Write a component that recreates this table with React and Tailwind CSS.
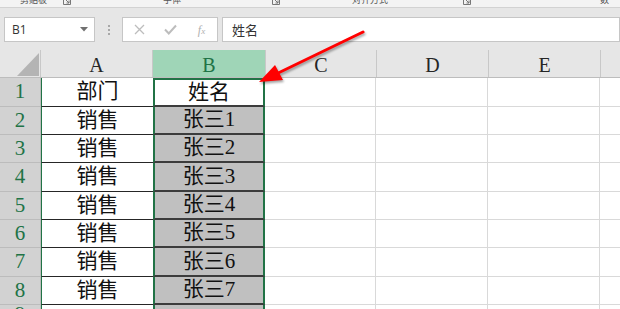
import React from "react";

const rowsData = [
  ["1", "部门", "姓名"],
  ["2", "销售", "张三1"],
  ["3", "销售", "张三2"],
  ["4", "销售", "张三3"],
  ["5", "销售", "张三4"],
  ["6", "销售", "张三5"],
  ["7", "销售", "张三6"],
  ["8", "销售", "张三7"],
  ["9", "", ""],
];
const heights = ["h-[29px]", "h-[28px]", "h-[28px]", "h-[29px]", "h-[28px]", "h-[28px]", "h-[29px]", "h-[28px]", "h-[20px]"];

function Launcher() {
  return (
    <svg width="8" height="8" viewBox="0 0 8 8" className="shrink-0 mt-[-3px]">
      <path d="M0.5 0.5 H7.5 V7.5 H0.5 Z" fill="none" stroke="#777" strokeWidth="1" />
      <path d="M3 3 L6 6 M6 3.5 V6 H3.5" fill="none" stroke="#777" strokeWidth="1" />
    </svg>
  );
}

export default function App() {
  return (
    <div className="relative w-[620px] h-[309px] overflow-hidden bg-white font-['Liberation_Serif','Noto_Sans_CJK_SC',serif]">
      {/* top ribbon strip (cut off) */}
      <div className="flex h-[8px] bg-[#f3f3f3] border-b border-[#d2d2d2] overflow-hidden text-[9px] leading-none text-[#555] font-['Noto_Sans_CJK_SC',sans-serif]">
        <div className="w-[20px] shrink-0" />
        <span className="shrink-0 mt-[-5px] w-[27px]">剪贴板</span>
        <div className="w-[16px] shrink-0" />
        <Launcher />
        <div className="w-[92px] shrink-0" />
        <span className="shrink-0 mt-[-5px] w-[18px]">字体</span>
        <div className="w-[91px] shrink-0" />
        <Launcher />
        <div className="w-[72px] shrink-0" />
        <span className="shrink-0 mt-[-5px] w-[36px]">对齐方式</span>
        <div className="w-[75px] shrink-0" />
        <Launcher />
        <div className="w-[129px] shrink-0" />
        <span className="shrink-0 mt-[-5px]">数</span>
      </div>

      {/* formula bar */}
      <div className="flex items-start h-[42px] bg-[#e6e6e6] pt-[9px] pl-[4px]">
        <div className="w-[91px] h-[25px] shrink-0 bg-white border border-[#c6c6c6] flex items-center justify-between pl-[7px] pr-[6px] font-['Open_Sans',sans-serif] text-[12px] text-[#333]">
          <span>B1</span>
          <svg width="8" height="5" viewBox="0 0 8 5"><path d="M0 0 H8 L4 4.5 Z" fill="#707070" /></svg>
        </div>
        <div className="w-[27px] h-[25px] shrink-0 flex flex-col items-center justify-center gap-[2px]">
          <span className="w-[2px] h-[2px] bg-[#a8a8a8]" />
          <span className="w-[2px] h-[2px] bg-[#a8a8a8]" />
          <span className="w-[2px] h-[2px] bg-[#a8a8a8]" />
        </div>
        <div className="w-[96px] h-[25px] shrink-0 bg-white border border-[#c6c6c6] flex items-center">
          <div className="w-[32px] flex justify-center">
            <svg width="11" height="11" viewBox="0 0 11 11"><path d="M1 1 L10 10 M10 1 L1 10" stroke="#bdbdbd" strokeWidth="1.3" /></svg>
          </div>
          <div className="w-[31px] flex justify-center">
            <svg width="13" height="11" viewBox="0 0 13 11"><path d="M1 5.5 L4.8 9.5 L12 1.5" fill="none" stroke="#bdbdbd" strokeWidth="2" /></svg>
          </div>
          <div className="w-[31px] flex justify-center text-[12px] italic text-[#b0b0b0] font-['Liberation_Serif',serif]">
            <span>f<span className="text-[9px]">x</span></span>
          </div>
        </div>
        <div className="ml-[4px] flex-1 h-[25px] bg-white border border-[#c6c6c6] flex items-center pl-[9px] font-['Noto_Sans_CJK_SC',sans-serif] text-[13px] text-[#333]">
          姓名
        </div>
      </div>

      {/* column header */}
      <div className="flex h-[28px] bg-[#e6e6e6] border-b border-[#bdbdbd] text-[20px] text-[#262626]">
        <div className="w-[41px] shrink-0 flex items-end justify-end pr-[1px] pb-[1px] border-r border-[#c8c8c8]">
          <svg width="22" height="23" viewBox="0 0 22 23"><path d="M22 0 V23 H0 Z" fill="#b4b4b4" /></svg>
        </div>
        <div className="w-[112px] shrink-0 flex items-center justify-center border-r border-[#c8c8c8] pt-[3px]">A</div>
        <div className="w-[112px] shrink-0 flex items-center justify-center bg-[#9fd5b7] text-[#217346] pt-[3px]">B</div>
        <div className="w-[112px] shrink-0 flex items-center justify-center border-l border-r border-[#c8c8c8] pt-[3px]">C</div>
        <div className="w-[112px] shrink-0 flex items-center justify-center border-r border-[#c8c8c8] pt-[3px]">D</div>
        <div className="w-[112px] shrink-0 flex items-center justify-center border-r border-[#c8c8c8] pt-[3px]">E</div>
        <div className="flex-1" />
      </div>

      {/* rows */}
      {rowsData.map(([n, a, b], i) => (
        <div key={n} className={`flex ${heights[i]}`}>
          <div className="w-[41px] shrink-0 flex items-center justify-center bg-[#d2d2d2] border-b border-r border-[#bcbcbc] text-[21px] text-[#217346]">
            {n}
          </div>
          <div className="w-[112px] shrink-0 flex items-center justify-center bg-white border-l border-[#217346] border-b-[1px] border-b-[#262626] text-[21px] text-[#111]">
            {a}
          </div>
          <div
            className={`w-[112px] shrink-0 flex items-center justify-center border-x-2 border-x-[#217346] border-b-2 border-b-[#3c3c3c] text-[21px] text-[#111] ${
              i === 0 ? "bg-white border-t-2 border-t-[#217346]" : "bg-[#c0c0c0]"
            }`}
          >
            {b}
          </div>
          <div className="w-[111px] shrink-0 border-r border-b border-[#d9d9d9]" />
          <div className="w-[112px] shrink-0 border-r border-b border-[#d9d9d9]" />
          <div className="w-[112px] shrink-0 border-r border-b border-[#d9d9d9]" />
          <div className="flex-1 border-b border-[#d9d9d9]" />
        </div>
      ))}

      {/* red arrow annotation */}
      <svg
        className="absolute left-0 top-0 pointer-events-none drop-shadow-[1px_2px_1px_rgba(0,0,0,0.35)]"
        width="620"
        height="309"
        viewBox="0 0 620 309"
      >
        <line x1="363" y1="32" x2="272" y2="76" stroke="#ff0000" strokeWidth="3" strokeLinecap="round" />
        <polygon points="259,82 275,65 283,80" fill="#ff0000" />
      </svg>
    </div>
  );
}
